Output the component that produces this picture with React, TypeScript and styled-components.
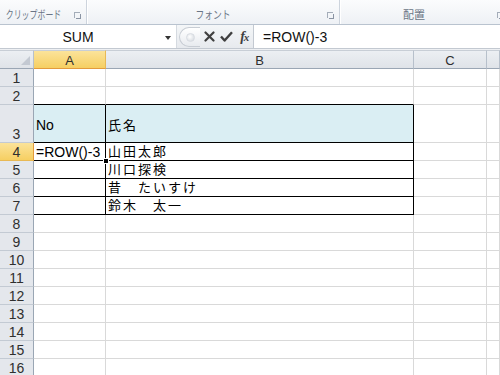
import React from "react";
import styled, { createGlobalStyle, css } from "styled-components";

const Global = createGlobalStyle`
  html, body { margin: 0; padding: 0; background: #ffffff; }
  body { width: 500px; height: 375px; overflow: hidden; font-family: "Liberation Sans", "Noto Sans CJK JP", sans-serif; }
  * { box-sizing: border-box; }
`;

const Page = styled.div`
  width: 500px;
  height: 375px;
  display: flex;
  flex-direction: column;
  overflow: hidden;
  background: #ffffff;
`;

/* ---------- Ribbon group labels ---------- */
const Ribbon = styled.div`
  height: 25px;
  flex: none;
  display: flex;
  background: linear-gradient(#fbfcfd, #eef1f5);
  border-bottom: 1px solid #b9c3cf;
`;

const Group = styled.div<{ $w: number }>`
  width: ${(p) => p.$w}px;
  flex: none;
  position: relative;
  display: flex;
  align-items: center;
  justify-content: center;
  border-right: 1px solid #cdd4dd;
  box-shadow: 1px 0 0 #ffffff;
  &:last-child { border-right: none; box-shadow: none; }
`;

const GroupLabel = styled.span<{ $sx: number; $shift: number }>`
  display: inline-block;
  font-family: "Noto Sans CJK JP", sans-serif;
  font-size: 11px;
  color: #6a7585;
  transform: translateX(${(p) => p.$shift}px) scaleX(${(p) => p.$sx});
  white-space: nowrap;
  margin-top: 3px;
`;

const Launcher = styled.span<{ $right?: number }>`
  position: absolute;
  right: ${(p) => p.$right ?? 6}px;
  top: 12px;
  width: 6px;
  height: 6px;
  border: 1px solid #a4adb9;
  border-right: none;
  border-bottom: none;
  &::after {
    content: "";
    position: absolute;
    left: 1px;
    top: 1px;
    width: 4px;
    height: 4px;
    border-right: 1px solid #8a94a3;
    border-bottom: 1px solid #8a94a3;
  }
`;

/* ---------- Formula bar ---------- */
const FormulaBar = styled.div`
  height: 24px;
  flex: none;
  display: flex;
  background: linear-gradient(#f4f6f8, #e7eaee);
  border-bottom: 1px solid #c3c9d1;
`;

const NameBox = styled.div`
  width: 177px;
  flex: none;
  background: #ffffff;
  border-right: 1px solid #d5dae0;
  display: flex;
  align-items: center;
  position: relative;
  font-size: 14px;
  color: #111;
`;

const NameText = styled.span`
  flex: 1;
  text-align: center;
  padding-right: 20px;
  padding-top: 1px;
`;

const DropArrow = styled.span`
  position: absolute;
  right: 5px;
  top: 11px;
  width: 0;
  height: 0;
  border-left: 3.5px solid transparent;
  border-right: 3.5px solid transparent;
  border-top: 4px solid #333;
`;

const ButtonStrip = styled.div`
  width: 76px;
  flex: none;
  display: flex;
  align-items: center;
  position: relative;
`;

const Knob = styled.span`
  width: 22px;
  height: 20px;
  margin-left: 2px;
  border-radius: 11px 0 0 11px;
  border: 1px solid #c8cdd4;
  border-right: none;
  background: linear-gradient(#ffffff, #e8ebef);
  position: relative;
  &::after {
    content: "";
    position: absolute;
    left: 6px;
    top: 5px;
    width: 7px;
    height: 7px;
    border-radius: 50%;
    background: radial-gradient(circle at 40% 40%, #ffffff, #d0d5db);
    border: 1px solid #d8dce2;
  }
`;

const IconBtn = styled.span`
  width: 18px;
  height: 20px;
  display: flex;
  align-items: center;
  justify-content: center;
  color: #3f3f3f;
`;

const Fx = styled.span`
  font-family: "Liberation Serif", "DejaVu Serif", serif;
  font-style: italic;
  font-weight: bold;
  font-size: 14px;
  color: #3f3f3f;
  letter-spacing: -1px;
  & > small { font-size: 11px; }
`;

const FormulaInput = styled.div`
  flex: 1;
  background: #ffffff;
  border-left: 1px solid #c3c9d1;
  display: flex;
  align-items: center;
  padding-left: 9px;
  padding-top: 1px;
  font-size: 14px;
  color: #111;
`;

const Gap = styled.div`
  height: 1px;
  flex: none;
  background: #eef0f3;
`;

/* ---------- Sheet ---------- */
const Sheet = styled.div`
  display: grid;
  grid-template-columns: 34px 72px 308px 73px 1fr;
  grid-template-rows: 19px 18px 18px 38px repeat(13, 18px);
  flex: none;
`;

const ColHead = styled.div<{ $sel?: boolean }>`
  background: ${(p) =>
    p.$sel ? "linear-gradient(#fbe39a, #f6cf62)" : "linear-gradient(#eceff3, #dfe3e8)"};
  border-right: 1px solid ${(p) => (p.$sel ? "#e8b955" : "#b7c0cb")};
  border-bottom: 1px solid ${(p) => (p.$sel ? "#e39b3c" : "#9aa6b4")};
  border-top: 1px solid #c8ced6;
  display: flex;
  align-items: center;
  justify-content: center;
  font-size: 13px;
  color: #2f2f2f;
  padding-top: 1px;
`;

const Corner = styled.div`
  background: linear-gradient(#eceff3, #dfe3e8);
  border-right: 1px solid #b7c0cb;
  border-bottom: 1px solid #9aa6b4;
  border-top: 1px solid #c8ced6;
  position: relative;
  &::after {
    content: "";
    position: absolute;
    right: 3px;
    bottom: 3px;
    width: 0;
    height: 0;
    border-left: 9px solid transparent;
    border-bottom: 9px solid #c3c9d2;
  }
`;

const RowHead = styled.div<{ $sel?: boolean }>`
  background: ${(p) =>
    p.$sel ? "linear-gradient(#fbe39a, #f6cf62)" : "#e4e7ec"};
  border-right: 1px solid ${(p) => (p.$sel ? "#e39b3c" : "#9aa6b4")};
  border-bottom: 1px solid ${(p) => (p.$sel ? "#e8b955" : "#c3cad3")};
  display: flex;
  align-items: flex-end;
  justify-content: center;
  font-size: 14px;
  line-height: 16px;
  color: #2f2f2f;
`;

const Cell = styled.div<{
  $fill?: string;
  $right?: boolean;
  $bottom?: boolean;
  $middle?: boolean;
}>`
  position: relative;
  background: ${(p) => p.$fill ?? "#ffffff"};
  border-right: 1px solid ${(p) => (p.$right ? "#000000" : "#d9d9d9")};
  border-bottom: 1px solid ${(p) => (p.$bottom ? "#000000" : "#d9d9d9")};
  display: flex;
  align-items: ${(p) => (p.$middle ? "center" : "flex-end")};
  padding-left: 2px;
  font-family: "Liberation Sans", "Noto Sans CJK JP", sans-serif;
  font-size: 14px;
  line-height: 16px;
  color: #000;
  white-space: nowrap;
  ${(p) =>
    p.$middle &&
    css`
      padding-top: 3px;
    `}
`;

const JpText = styled.span`
  font-family: "Noto Sans CJK JP", sans-serif;
  font-size: 13px;
  line-height: 16px;
  letter-spacing: 2px;
  padding-bottom: 1px;
`;

const FillHandle = styled.span`
  position: absolute;
  right: -4px;
  bottom: -4px;
  width: 6px;
  height: 6px;
  background: #000;
  border: 1px solid #fff;
  z-index: 2;
`;

const cols = ["A", "B", "C", ""];

type RowDef = {
  n: number;
  a?: string;
  b?: string;
  header?: boolean;
  table?: boolean;
  topOfTable?: boolean;
  sel?: boolean;
};

const rows: RowDef[] = [
  { n: 1 },
  { n: 2, topOfTable: true },
  { n: 3, a: "No", b: "氏名", header: true, table: true },
  { n: 4, a: "=ROW()-3", b: "山田太郎", table: true, sel: true },
  { n: 5, b: "川口探検", table: true },
  { n: 6, b: "昔　たいすけ", table: true },
  { n: 7, b: "鈴木　太一", table: true },
  ...Array.from({ length: 9 }, (_, i) => ({ n: 8 + i })),
];

export default function App() {
  return (
    <Page>
      <Global />
      <Ribbon>
        <Group $w={87}>
          <GroupLabel $sx={0.72} $shift={-10}>クリップボード</GroupLabel>
          <Launcher />
        </Group>
        <Group $w={253}>
          <GroupLabel $sx={0.8} $shift={0}>フォント</GroupLabel>
          <Launcher />
        </Group>
        <Group $w={160}>
          <GroupLabel $sx={1} $shift={-6}>配置</GroupLabel>
          <Launcher $right={-3} />
        </Group>
      </Ribbon>

      <FormulaBar>
        <NameBox>
          <NameText>SUM</NameText>
          <DropArrow />
        </NameBox>
        <ButtonStrip>
          <Knob />
          <IconBtn>
            <svg width="11" height="11" viewBox="0 0 11 11">
              <path d="M1.5 1.5 L9.5 9.5 M9.5 1.5 L1.5 9.5" stroke="#3f3f3f" strokeWidth="2.2" strokeLinecap="round" />
            </svg>
          </IconBtn>
          <IconBtn>
            <svg width="13" height="11" viewBox="0 0 13 11">
              <path d="M1 5.5 L4.6 9.5 L12 1.2" stroke="#3f3f3f" strokeWidth="2.4" fill="none" strokeLinejoin="round" />
            </svg>
          </IconBtn>
          <IconBtn>
            <Fx>
              f<small>x</small>
            </Fx>
          </IconBtn>
        </ButtonStrip>
        <FormulaInput>=ROW()-3</FormulaInput>
      </FormulaBar>

      <Gap />

      <Sheet>
        <Corner />
        {cols.map((c) => (
          <ColHead key={c || "d"} $sel={c === "A"}>
            {c}
          </ColHead>
        ))}
        {rows.map((r) => {
          const fill = r.header ? "#daeef3" : undefined;
          const tb = r.table || r.topOfTable;
          return (
            <React.Fragment key={r.n}>
              <RowHead $sel={r.sel}>{r.n}</RowHead>
              <Cell $fill={fill} $right={r.table} $bottom={tb} $middle={r.header}>
                {r.a}
                {r.sel && <FillHandle />}
              </Cell>
              <Cell $fill={fill} $right={r.table} $bottom={tb} $middle={r.header}>
                {r.b && <JpText>{r.b}</JpText>}
              </Cell>
              <Cell />
              <Cell />
            </React.Fragment>
          );
        })}
      </Sheet>
    </Page>
  );
}
